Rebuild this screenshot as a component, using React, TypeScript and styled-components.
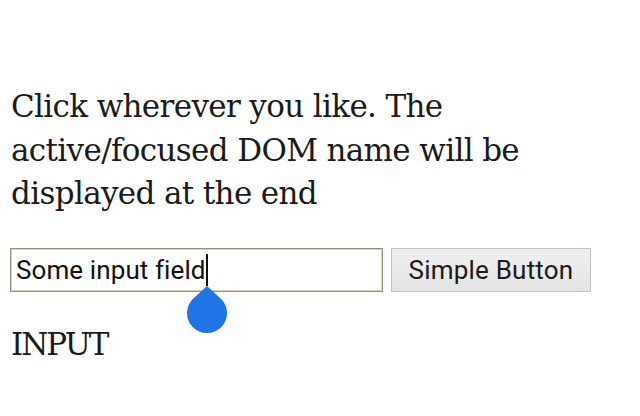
import React from "react";
import styled, { createGlobalStyle } from "styled-components";

const Global = createGlobalStyle`
  html, body { margin: 0; padding: 0; background: #ffffff; }
  body { width: 640px; height: 416px; overflow: hidden; }
`;

const Page = styled.div`
  padding: 85px 0 0 10px;
  font-family: "DejaVu Serif", "Liberation Serif", serif;
  color: #1a1a1a;
`;

const Intro = styled.p`
  margin: 0 0 0 1px;
  width: 580px;
  font-size: 31px;
  line-height: 43.5px;
  letter-spacing: -0.65px;
`;

const Row = styled.div`
  display: flex;
  align-items: center;
  gap: 8px;
  margin-top: 32px;
`;

const FieldWrap = styled.div`
  position: relative;
`;

const Field = styled.div`
  box-sizing: border-box;
  width: 373px;
  height: 44px;
  border: 1px solid #9a8f76;
  box-shadow: inset 0 0 0 1px #d9d1bf;
  background: #ffffff;
  display: flex;
  align-items: center;
  padding-left: 5px;
  font-family: Roboto, "Liberation Sans", sans-serif;
  font-size: 26px;
  letter-spacing: 0.1px;
  color: #111;
`;

const Caret = styled.span`
  display: inline-block;
  width: 2px;
  height: 32px;
  background: #111;
`;

const Handle = styled.svg`
  position: absolute;
  left: 176px;
  top: 37px;
`;

const Button = styled.button`
  box-sizing: border-box;
  height: 44px;
  width: 200px;
  padding: 0;
  border: 1px solid #c8c1b1;
  background: linear-gradient(#f0f0f0, #e4e4e4);
  font-family: Roboto, "Liberation Sans", sans-serif;
  font-size: 26px;
  letter-spacing: 0.2px;
  color: #1a1a1a;
  border-radius: 0;
`;

const Result = styled.div`
  margin-top: 34px;
  margin-left: 1px;
  font-size: 31px;
  letter-spacing: -2px;
`;

export default function App() {
  return (
    <>
      <Global />
      <Page>
        <Intro>
          Click wherever you like. The active/focused DOM name will be displayed at the end
        </Intro>
        <Row>
          <FieldWrap>
            <Field>
              Some input field
              <Caret />
            </Field>
            <Handle width="42" height="50" viewBox="0 0 42 50">
              <path d="M21 1 L34.4 13.2 A20 20 0 1 1 7.6 13.2 Z" fill="#1f74e6" />
            </Handle>
          </FieldWrap>
          <Button>Simple Button</Button>
        </Row>
        <Result>INPUT</Result>
      </Page>
    </>
  );
}
